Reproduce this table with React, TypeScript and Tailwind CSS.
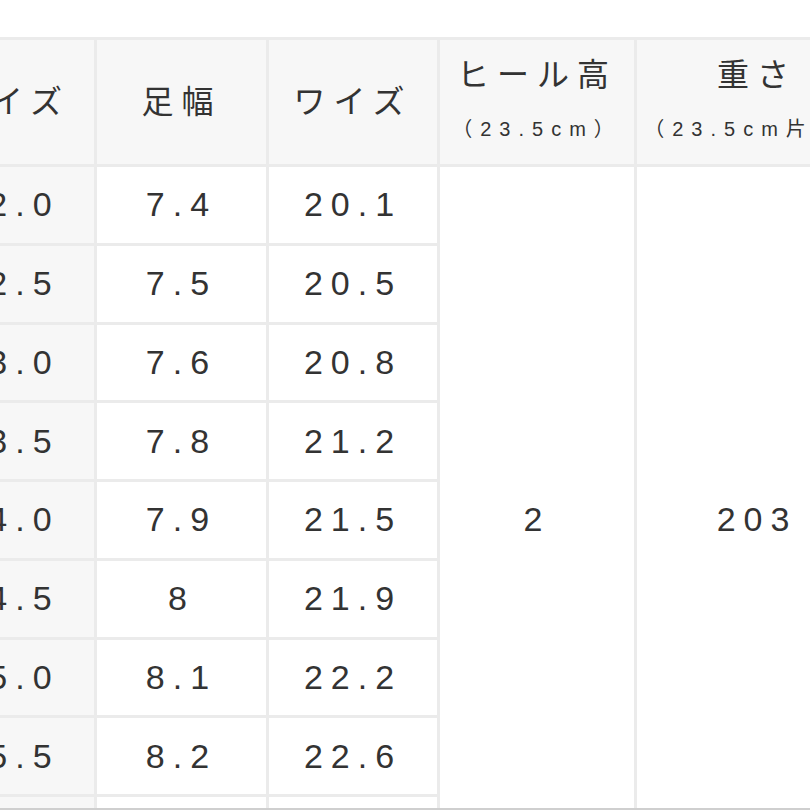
const rows = [
  { size: '22.0', foot: '7.4', wise: '20.1' },
  { size: '22.5', foot: '7.5', wise: '20.5' },
  { size: '23.0', foot: '7.6', wise: '20.8' },
  { size: '23.5', foot: '7.8', wise: '21.2' },
  { size: '24.0', foot: '7.9', wise: '21.5' },
  { size: '24.5', foot: '8', wise: '21.9' },
  { size: '25.0', foot: '8.1', wise: '22.2' },
  { size: '25.5', foot: '8.2', wise: '22.6' },
  { size: '26.0', foot: '8.3', wise: '22.9' },
];

const font = { fontFamily: '"Liberation Sans", "Noto Sans CJK JP", sans-serif' };

function HeadCell({ title, sub }: { title: string; sub?: string }) {
  if (!sub) {
    return (
      <div className="flex items-center justify-center bg-[#f7f7f7] text-[32px] leading-[40px] tracking-[8px] text-[#333]">
        {title}
      </div>
    );
  }
  return (
    <div className="flex flex-col items-center overflow-hidden whitespace-nowrap bg-[#f7f7f7] pt-[15px] text-[#333]">
      <div className="text-[32px] leading-[40px] tracking-[8px]">{title}</div>
      <div className="mt-[22px] text-[20px] leading-[24px] tracking-[8px]">{sub}</div>
    </div>
  );
}

export default function App() {
  return (
    <div className="h-[810px] w-[810px] overflow-hidden border-b-2 border-[#cfcfcf] bg-white pt-[37px]" style={font}>
      <div className="ml-[-76px] grid w-max grid-cols-[167px_169px_168px_194px_240px] grid-rows-[124px_repeat(9,75.75px)] gap-[3px] bg-[#ebebeb] p-[3px]">
        <HeadCell title="サイズ" />
        <HeadCell title="足幅" />
        <HeadCell title="ワイズ" />
        <HeadCell title="ヒール高" sub="（23.5cm）" />
        <HeadCell title="重さ" sub="（23.5cm片足）" />

        {rows.map((r, i) => (
          <div key={r.size} className="contents">
            <div className="flex items-center justify-center bg-[#f7f7f7] text-[34px] tracking-[8px] text-[#333]">
              {r.size}
            </div>
            <div className="flex items-center justify-center bg-white text-[34px] tracking-[8px] text-[#333]">
              {r.foot}
            </div>
            <div className="flex items-center justify-center bg-white text-[34px] tracking-[8px] text-[#333]">
              {r.wise}
            </div>
            {i === 0 && (
              <>
                <div className="row-span-9 flex items-center justify-center bg-white text-[34px] tracking-[8px] text-[#333]">
                  2
                </div>
                <div className="row-span-9 flex items-center justify-center bg-white text-[34px] tracking-[8px] text-[#333]">
                  203
                </div>
              </>
            )}
          </div>
        ))}
      </div>
    </div>
  );
}
